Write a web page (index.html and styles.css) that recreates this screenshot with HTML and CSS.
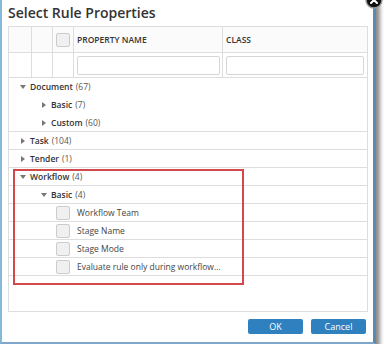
FILE: index.html
```html
<!DOCTYPE html>
<html lang="en">
<head>
    <meta charset="UTF-8">
    <meta name="viewport" content="width=device-width, initial-scale=1.0">
    <title>Select Rule Properties</title>
    <link rel="stylesheet" href="styles.css">
</head>
<body>
    <div class="dialog">
        <span class="close-btn">
            <svg width="18" height="18" viewBox="0 0 18 18">
                <circle cx="9" cy="9" r="8" fill="#111" stroke="#999" stroke-width="1.5"/>
                <path d="M6 6 L12 12 M12 6 L6 12" stroke="#fff" stroke-width="2" stroke-linecap="round"/>
            </svg>
        </span>
        <h1 class="title">Select Rule Properties</h1>

        <div class="grid">
            <div class="grid-row grid-head">
                <div class="cell"></div>
                <div class="cell"></div>
                <div class="cell center"><span class="checkbox"></span></div>
                <div class="cell label">PROPERTY NAME</div>
                <div class="cell label">CLASS</div>
            </div>
            <div class="grid-row grid-filter">
                <div class="cell"></div>
                <div class="cell"></div>
                <div class="cell"></div>
                <div class="cell"><input type="text" class="filter-input"></div>
                <div class="cell"><input type="text" class="filter-input last"></div>
            </div>

            <ul class="tree">
                <li class="node lvl0 no-line">
                    <svg class="caret" width="10" height="8"><polygon points="0,2 6,2 3,6"/></svg>
                    <span class="name">Document</span><span class="count">(67)</span>
                </li>
                <li class="node lvl1 no-line">
                    <svg class="caret" width="10" height="8"><polygon points="1,1 5,4 1,7"/></svg>
                    <span class="name">Basic</span><span class="count">(7)</span>
                </li>
                <li class="node lvl1">
                    <svg class="caret" width="10" height="8"><polygon points="1,1 5,4 1,7"/></svg>
                    <span class="name">Custom</span><span class="count">(60)</span>
                </li>
                <li class="node lvl0">
                    <svg class="caret" width="10" height="8"><polygon points="1,1 5,4 1,7"/></svg>
                    <span class="name">Task</span><span class="count">(104)</span>
                </li>
                <li class="node lvl0">
                    <svg class="caret" width="10" height="8"><polygon points="1,1 5,4 1,7"/></svg>
                    <span class="name">Tender</span><span class="count">(1)</span>
                </li>
                <li class="node lvl0">
                    <svg class="caret" width="10" height="8"><polygon points="0,2 6,2 3,6"/></svg>
                    <span class="name">Workflow</span><span class="count">(4)</span>
                </li>
                <li class="node lvl1">
                    <svg class="caret" width="10" height="8"><polygon points="0,2 6,2 3,6"/></svg>
                    <span class="name">Basic</span><span class="count">(4)</span>
                </li>
                <li class="node lvl2"><span class="checkbox"></span><span class="leaf">Workflow Team</span></li>
                <li class="node lvl2"><span class="checkbox"></span><span class="leaf">Stage Name</span></li>
                <li class="node lvl2"><span class="checkbox"></span><span class="leaf">Stage Mode</span></li>
                <li class="node lvl2"><span class="checkbox"></span><span class="leaf">Evaluate rule only during workflow...</span></li>
            </ul>

            <div class="highlight"></div>
        </div>

        <div class="actions">
            <button class="btn">OK</button>
            <button class="btn">Cancel</button>
        </div>
    </div>
</body>
</html>
```

FILE: styles.css
```css
body {
    margin: 0;
    background: #fff;
    font-family: "Open Sans", Arial, sans-serif;
    color: #333;
}

.dialog {
    position: relative;
    width: 376px;
    box-sizing: border-box;
    background: #fff;
    border-left: 2px solid #86b8da;
    border-right: 3px solid #5f88ad;
    border-bottom: 2px solid #7ea7c9;
    box-shadow: 4px 5px 4px rgba(0, 0, 0, 0.45);
    padding: 4px 0 8px 0;
}

.close-btn {
    position: absolute;
    right: -10px;
    top: -9px;
    width: 18px;
    height: 18px;
}

.title {
    margin: 0 0 4px 6px;
    font-size: 14px;
    line-height: 18px;
    font-weight: 600;
    color: #333;
}

.grid {
    position: relative;
    margin: 0 5px 0 6px;
    height: 286px;
    box-sizing: border-box;
    border: 1px solid #ddd;
}

.grid-row {
    display: grid;
    grid-template-columns: 23px 21px 21px 149px 1fr;
    border-bottom: 1px solid #ddd;
}
.grid-head {
    height: 26px;
    box-sizing: border-box;
    background: #fbfbfb;
}
.grid-filter {
    height: 25px;
    box-sizing: border-box;
}

.cell {
    border-right: 1px solid #ddd;
    display: flex;
    align-items: center;
    box-sizing: border-box;
}
.cell:last-child {
    border-right: none;
}
.cell.center {
    justify-content: center;
}
.cell.label {
    padding-left: 3px;
    font-size: 8.5px;
    font-weight: 600;
    color: #333;
}

.checkbox {
    display: inline-block;
    width: 12px;
    height: 12px;
    border: 1px solid #ccc;
    border-radius: 2px;
    background: #f0f0f0;
    flex-shrink: 0;
}

.filter-input {
    width: 143px;
    height: 19px;
    margin-left: 3px;
    padding: 0;
    box-sizing: border-box;
    border: 1px solid #d6d6d6;
    border-radius: 2px;
    background: #fff;
}
.filter-input.last {
    width: 138px;
}

.tree {
    list-style: none;
    margin: 0;
    padding: 0;
}
.node {
    display: flex;
    align-items: center;
    height: 18px;
    box-sizing: border-box;
    border-bottom: 1px solid #ddd;
    font-size: 8.5px;
    white-space: nowrap;
}
.node.no-line {
    border-bottom-color: transparent;
}
.lvl0 { padding-left: 11px; }
.lvl1 { padding-left: 32px; }
.lvl2 { padding-left: 47px; }

.caret {
    fill: #777;
    flex-shrink: 0;
}
.name {
    font-weight: 600;
    color: #333;
    margin-right: 3px;
}
.count {
    color: #555;
}
.leaf {
    margin-left: 7px;
    color: #444;
}

.highlight {
    position: absolute;
    left: 4px;
    top: 142px;
    width: 231px;
    height: 116px;
    box-sizing: border-box;
    border: 2px solid #d3494b;
}

.actions {
    display: flex;
    justify-content: flex-end;
    gap: 8px;
    margin: 7px 7px 0 0;
}
.btn {
    width: 55px;
    height: 15px;
    padding: 0;
    border: none;
    border-radius: 2px;
    background: #2e80bf;
    color: #fff;
    font-family: "Open Sans", Arial, sans-serif;
    font-size: 9px;
}
```
